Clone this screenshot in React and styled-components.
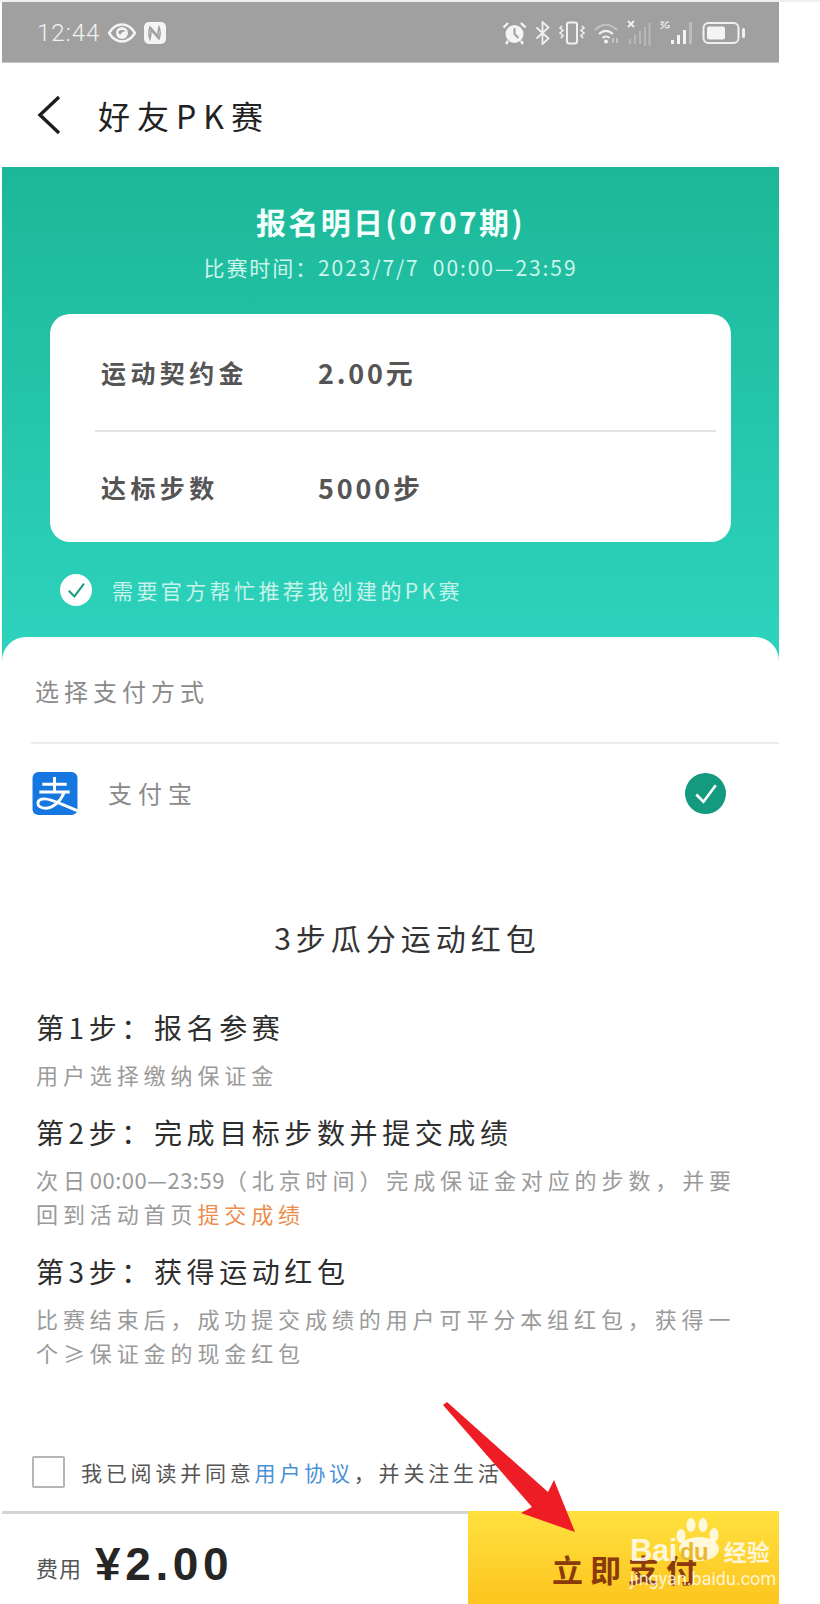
import React from "react";
import styled, { createGlobalStyle } from "styled-components";

const Global = createGlobalStyle`
  html, body { margin: 0; padding: 0; background: #fff; }
  body { font-family: "Noto Sans CJK SC", "Noto Sans", sans-serif; }
  * { box-sizing: border-box; }
`;

const Page = styled.div`
  position: relative;
  width: 820px;
  height: 1604px;
  overflow: hidden;
  background: #fff;
`;
const TopStrip = styled.div`
  height: 2px;
  background: #efefef;
`;
const Phone = styled.div`
  width: 777px;
  margin-left: 2px;
  height: 1602px;
  display: flex;
  flex-direction: column;
  background: #fff;
`;
const StatusBar = styled.div`
  height: 61px;
  flex: none;
  background: #a0a0a0;
  border-bottom: 1px solid #c4c4c4;
  display: flex;
  align-items: center;
  justify-content: space-between;
  padding: 2px 34px 0 35px;
  color: #f2f2f2;
`;
const StatusGroup = styled.div`
  display: flex;
  align-items: center;
  gap: ${p => p.$gap || 6}px;
`;
const Clock = styled.span`
  font-family: "Roboto", sans-serif;
  font-weight: 300;
  font-size: 24px;
  letter-spacing: 1px;
`;
const Header = styled.div`
  height: 104px;
  flex: none;
  display: flex;
  align-items: center;
  padding-left: 34px;
  gap: 36px;
`;
const HeaderTitle = styled.h1`
  margin: 0;
  font-size: 32px;
  font-weight: 400;
  letter-spacing: 7px;
  color: #222;
  line-height: 1;
`;
const Hero = styled.section`
  height: 494px;
  flex: none;
  background: linear-gradient(180deg, #1cb798 0, #2dd2bc 470px);
  display: flex;
  flex-direction: column;
  align-items: center;
  padding-top: 36px;
`;
const HeroTitle = styled.h2`
  margin: 0;
  font-size: 30px;
  line-height: 36px;
  font-weight: 700;
  letter-spacing: 2.3px;
  color: #f4fffc;
`;
const HeroSub = styled.div`
  margin-top: 15px;
  font-size: 21px;
  line-height: 26px;
  color: #cdf5ec;
  letter-spacing: 1.9px;
`;
const Card = styled.div`
  margin-top: 34px;
  width: 681px;
  height: 228px;
  background: #fff;
  border-radius: 20px;
  display: flex;
  flex-direction: column;
  align-items: flex-start;
  padding: 0 15px 0 45px;
`;
const CardRow = styled.div`
  height: ${p => p.$height}px;
  width: 100%;
  display: flex;
  align-items: center;
  padding-left: 6px;
  color: #555;
  font-size: 25px;
  font-weight: 700;
`;
const CardLabel = styled.span`
  width: 217px;
  letter-spacing: 4.4px;
`;
const CardValue = styled.span`
  font-size: 27px;
  letter-spacing: 2.8px;
`;
const CardRule = styled.div`
  height: 2px;
  width: 621px;
  background: #e2e2e2;
`;
const Recommend = styled.div`
  align-self: flex-start;
  margin: 32px 0 0 58px;
  display: flex;
  align-items: center;
  gap: 20px;
  font-size: 21px;
  color: #c6f3ea;
  letter-spacing: 3.4px;
`;
const Sheet = styled.section`
  flex: 1;
  margin-top: -24px;
  position: relative;
  display: flex;
  flex-direction: column;
  min-height: 0;
  background: #fff;
  border-radius: 24px 24px 0 0;
`;
const PayHeading = styled.div`
  margin-left: 29px;
  height: 107px;
  padding: 38px 0 0 4px;
  border-bottom: 2px solid #ececec;
  font-size: 24px;
  line-height: 32px;
  letter-spacing: 5px;
  color: #8a8a8a;
`;
const PayRow = styled.div`
  height: 44px;
  margin-top: 27px;
  padding: 0 53px 0 30px;
  display: flex;
  align-items: center;
  gap: 30px;
`;
const PayName = styled.span`
  flex: 1;
  font-size: 24px;
  line-height: 38px;
  letter-spacing: 6px;
  color: #8a8a8a;
`;
const GuideTitle = styled.h3`
  margin: 102px 0 0;
  text-align: center;
  font-size: 30px;
  line-height: 40px;
  font-weight: 400;
  letter-spacing: 5px;
  color: #333;
  padding-left: 34px;
`;
const Steps = styled.div`
  margin-top: 52px;
  padding: 0 25px 0 34px;
`;
const StepTitle = styled.div`
  font-size: 28px;
  line-height: 36px;
  letter-spacing: 4.6px;
  color: #2e2e2e;
  margin-top: ${p => p.$top || 0}px;
`;
const StepBody = styled.p`
  margin: 12px 0 0;
  font-size: 22px;
  line-height: 34px;
  letter-spacing: 4.9px;
  color: #9a9a9a;
`;
const Digits = styled.span`
  letter-spacing: 0.5px;
`;
const Hot = styled.span`
  color: #ec8d4d;
`;
const Agreement = styled.div`
  margin-top: 86px;
  padding-left: 30px;
  height: 34px;
  display: flex;
  align-items: center;
  gap: 16px;
  font-size: 21px;
  letter-spacing: 3.8px;
  color: #555;
`;
const Box = styled.span`
  width: 33px;
  height: 32px;
  flex: none;
  border: 2px solid #b5b5b5;
  border-radius: 2px;
`;
const Link = styled.span`
  color: #4a90d6;
`;
const Footer = styled.div`
  position: relative;
  margin-top: 22px;
  flex: 1;
  border-top: 3px solid #d4d4d4;
  display: flex;
`;
const Cost = styled.div`
  flex: 1;
  display: flex;
  align-items: center;
  padding: 10px 0 0 34px;
  gap: 13px;
`;
const CostLabel = styled.span`
  margin-top: 6px;
  font-size: 22px;
  color: #555;
  letter-spacing: 1px;
`;
const CostValue = styled.span`
  font-family: "Liberation Sans", sans-serif;
  font-weight: 700;
  font-size: 46px;
  color: #262626;
  letter-spacing: 4.6px;
`;
const PayButton = styled.div`
  width: 311px;
  margin-top: -3px;
  background: linear-gradient(180deg, #ffe13f 0%, #fdc51f 100%);
  display: flex;
  align-items: center;
  padding: 22px 0 0 84px;
  font-size: 31px;
  font-weight: 700;
  letter-spacing: 7px;
  color: #8b3a0b;
`;
const Arrow = styled.svg`
  position: absolute;
  left: 0;
  top: 0;
  pointer-events: none;
`;
const Watermark = styled.div`
  position: absolute;
  left: 630px;
  top: 1517px;
  width: 150px;
  color: rgba(255,255,255,.82);
  pointer-events: none;
`;
const MarkTop = styled.div`
  position: relative;
  display: flex;
  align-items: center;
  font-family: "Liberation Sans", sans-serif;
  font-weight: 700;
  font-size: 31px;
  height: 44px;
  margin-top: 12px;
  letter-spacing: -0.5px;
`;
const MarkDu = styled.span`
  font-size: 24px;
  color: #e9b92c;
  margin: 2px 0 0 3px;
  width: 44px;
`;
const MarkCn = styled.span`
  font-family: "Noto Sans CJK SC", sans-serif;
  font-size: 23px;
  font-weight: 700;
  letter-spacing: 0;
`;
const MarkUrl = styled.div`
  font-family: "Roboto", sans-serif;
  font-size: 18px;
  line-height: 20px;
  margin-top: -4px;
  white-space: nowrap;
`;
const Paw = styled.svg`
  position: absolute;
  left: 45px;
  top: 0;
`;

const Eye = () => (
  <svg width="28" height="20" viewBox="0 0 28 20" fill="none">
    <path d="M1 10C5 3.500 9.500 1.500 14 1.500S23 3.500 27 10c-4 6.500-8.500 8.500-13 8.500S5 16.500 1 10z" stroke="#f4f4f4" strokeWidth="2.600" />
    <circle cx="14" cy="10" r="6" fill="#f4f4f4" />
    <path d="M10 9c2.500-2.500 5-2.500 8-.8-3 .2-4.800 1.300-6 3.800z" fill="#a0a0a0" />
  </svg>
);
const Nfc = () => (
  <svg width="22" height="22" viewBox="0 0 22 22">
    <rect x="0" y="0" width="22" height="22" rx="5" fill="#f4f4f4" />
    <path d="M6 5c-1.500 4-1.500 8 0 12c1-3 1-6 1-9l8 9c1.500-4 1.500-8 0-12c-1 3-1 6-1 9z" stroke="#a0a0a0" strokeWidth="1.500" fill="none" />
  </svg>
);
const Alarm = () => (
  <svg width="25" height="24" viewBox="0 0 25 24">
    <circle cx="12.500" cy="13" r="9" fill="#f4f4f4" />
    <path d="M12.500 7v6l4 4" stroke="#a0a0a0" strokeWidth="2" fill="none" />
    <path d="M1.500 6.500L6 2M23.500 6.500L19 2M6 20l-2 3M19 20l2 3" stroke="#f4f4f4" strokeWidth="2.400" />
  </svg>
);
const Bluetooth = () => (
  <svg width="15" height="24" viewBox="0 0 15 24" fill="none">
    <path d="M1.500 6.500l12 11-6 5.500V1l6 5.500-12 11" stroke="#f0f0f0" strokeWidth="1.800" />
  </svg>
);
const Vibrate = () => (
  <svg width="28" height="24" viewBox="0 0 28 24" fill="none" stroke="#f0f0f0">
    <rect x="9" y="1.500" width="10" height="21" rx="2" strokeWidth="2" />
    <path d="M4 5l-2 2 3 2.500-3 2.500 3 2.500-2 2.500M24 5l2 2-3 2.500 3 2.500-3 2.500 2 2.500" strokeWidth="1.600" />
  </svg>
);
const Wifi = () => (
  <svg width="25" height="22" viewBox="0 0 25 22" fill="none">
    <path d="M1 8c7-7 15-7 22 0" stroke="#c2c2c2" strokeWidth="2.200" />
    <path d="M5 12c4.500-4 9.500-4 14 0" stroke="#f0f0f0" strokeWidth="2.200" />
    <path d="M8.500 16c2-2 5-2 7 0" stroke="#f0f0f0" strokeWidth="2.200" />
    <circle cx="12" cy="19.500" r="2" fill="#f0f0f0" />
    <path d="M19 16v5M23 16v5" stroke="#d8d8d8" strokeWidth="1.200" />
  </svg>
);
const SimOff = () => (
  <svg width="24" height="26" viewBox="0 0 24 26" fill="none">
    <path d="M1 1l6 6M7 1L1 7" stroke="#f0f0f0" strokeWidth="1.800" />
    <path d="M3 19v5M8 15v9M13 11v13M18 7v19M22.500 3v23" stroke="#b8b8b8" strokeWidth="2" />
  </svg>
);
const Sim = () => (
  <svg width="35" height="24" viewBox="0 0 35 24">
    <rect x="12" y="19" width="3" height="4" fill="#f4f4f4" />
    <rect x="18" y="14" width="3" height="9" fill="#f4f4f4" />
    <rect x="24" y="9" width="3" height="14" fill="#f4f4f4" />
    <rect x="30" y="1" width="3" height="22" fill="#bdbdbd" />
    <path d="M1 1h3.500L2.500 3.500c2.500 0 2.500 4-1.500 4M10 1.500c-2.500-1-4 1-4 3s1.500 3 4 2V4.500H8.500" stroke="#f0f0f0" strokeWidth="1.200" fill="none" />
  </svg>
);
const Battery = () => (
  <svg width="43" height="22" viewBox="0 0 43 22" fill="none">
    <rect x="1.500" y="1" width="35" height="20" rx="5" stroke="#f0f0f0" strokeWidth="2" />
    <rect x="5" y="4.500" width="18" height="13" rx="2" fill="#f4f4f4" />
    <rect x="40" y="6" width="3" height="10" rx="1.500" fill="#f0f0f0" />
  </svg>
);
const Back = () => (
  <svg width="26" height="40" viewBox="0 0 26 40" fill="none">
    <path d="M23 2L4 20l19 18" stroke="#1d1d1d" strokeWidth="3.400" />
  </svg>
);
const Tick = ({ size, bg, fg }) => (
  <svg width={size} height={size} viewBox="0 0 40 40" style={{ flex: "none" }}>
    <circle cx="20" cy="20" r="20" fill={bg} />
    <path d="M11 21l7 7 12-16" stroke={fg} strokeWidth="2.600" fill="none" />
  </svg>
);
const Alipay = () => (
  <svg width="46" height="43" viewBox="0 0 46 44" style={{ flex: "none" }}>
    <rect width="46" height="44" rx="6" fill="#1677e0" />
    <path d="M10 12.500h25M22.500 5v15.500M7 20.500h31M32.500 20.500C29 30 21 37 13 37C8 37 5.500 34.500 5.500 32C5.500 29 8.500 27.500 12.500 27.500C20 27.500 31 34 46 39.500" stroke="#fff" strokeWidth="3" fill="none" />
  </svg>
);

export default function App() {
  return (
    <Page>
      <Global />
      <TopStrip />
      <Phone>
        <StatusBar>
          <StatusGroup $gap={8}>
            <Clock>12:44</Clock>
            <Eye />
            <Nfc />
          </StatusGroup>
          <StatusGroup $gap={8}>
            <Alarm />
            <Bluetooth />
            <Vibrate />
            <Wifi />
            <SimOff />
            <Sim />
            <Battery />
          </StatusGroup>
        </StatusBar>
        <Header>
          <Back />
          <HeaderTitle>好友PK赛</HeaderTitle>
        </Header>
        <Hero>
          <HeroTitle>报名明日(0707期)</HeroTitle>
          <HeroSub>比赛时间：2023/7/7&nbsp;&nbsp;00:00—23:59</HeroSub>
          <Card>
            <CardRow $height={116}>
              <CardLabel>运动契约金</CardLabel>
              <CardValue>2.00元</CardValue>
            </CardRow>
            <CardRule />
            <CardRow $height={110}>
              <CardLabel>达标步数</CardLabel>
              <CardValue>5000步</CardValue>
            </CardRow>
          </Card>
          <Recommend>
            <Tick size={32} bg="#fff" fg="#1e9d84" />
            需要官方帮忙推荐我创建的PK赛
          </Recommend>
        </Hero>
        <Sheet>
          <PayHeading>选择支付方式</PayHeading>
          <PayRow>
            <Alipay />
            <PayName>支付宝</PayName>
            <Tick size={41} bg="#149a7f" fg="#fff" />
          </PayRow>
          <GuideTitle>3步瓜分运动红包</GuideTitle>
          <Steps>
            <StepTitle>第1步：报名参赛</StepTitle>
            <StepBody>用户选择缴纳保证金</StepBody>
            <StepTitle $top={23}>第2步：完成目标步数并提交成绩</StepTitle>
            <StepBody>次日<Digits>00:00—23:59</Digits>（北京时间）完成保证金对应的步数，并要回到活动首页<Hot>提交成绩</Hot></StepBody>
            <StepTitle $top={23}>第3步：获得运动红包</StepTitle>
            <StepBody>比赛结束后，成功提交成绩的用户可平分本组红包，获得一个≥保证金的现金红包</StepBody>
          </Steps>
          <Agreement>
            <Box />
            <span>我已阅读并同意<Link>用户协议</Link>，并关注生活</span>
          </Agreement>
          <Footer>
            <Cost>
              <CostLabel>费用</CostLabel>
              <CostValue>¥2.00</CostValue>
            </Cost>
            <PayButton>立即支付</PayButton>
          </Footer>
        </Sheet>
      </Phone>
      <Arrow width="820" height="1604" viewBox="0 0 820 1604">
        <path d="M443 1405L447 1402L548 1492L554 1480L575 1532L521 1513L532 1507Z" fill="#ee1c25" />
      </Arrow>
      <Watermark>
        <Paw width="46" height="44" viewBox="0 0 46 44" fill="rgba(255,255,255,.82)">
          <ellipse cx="6" cy="19" rx="4.500" ry="7" />
          <ellipse cx="16" cy="8" rx="4.500" ry="7" />
          <ellipse cx="28" cy="8" rx="4.500" ry="7" />
          <ellipse cx="39" cy="18" rx="4.500" ry="7" />
          <ellipse cx="24" cy="32" rx="20" ry="12" />
        </Paw>
        <MarkTop>Bai<MarkDu>du</MarkDu><MarkCn>经验</MarkCn></MarkTop>
        <MarkUrl>jingyan.baidu.com</MarkUrl>
      </Watermark>
    </Page>
  );
}
